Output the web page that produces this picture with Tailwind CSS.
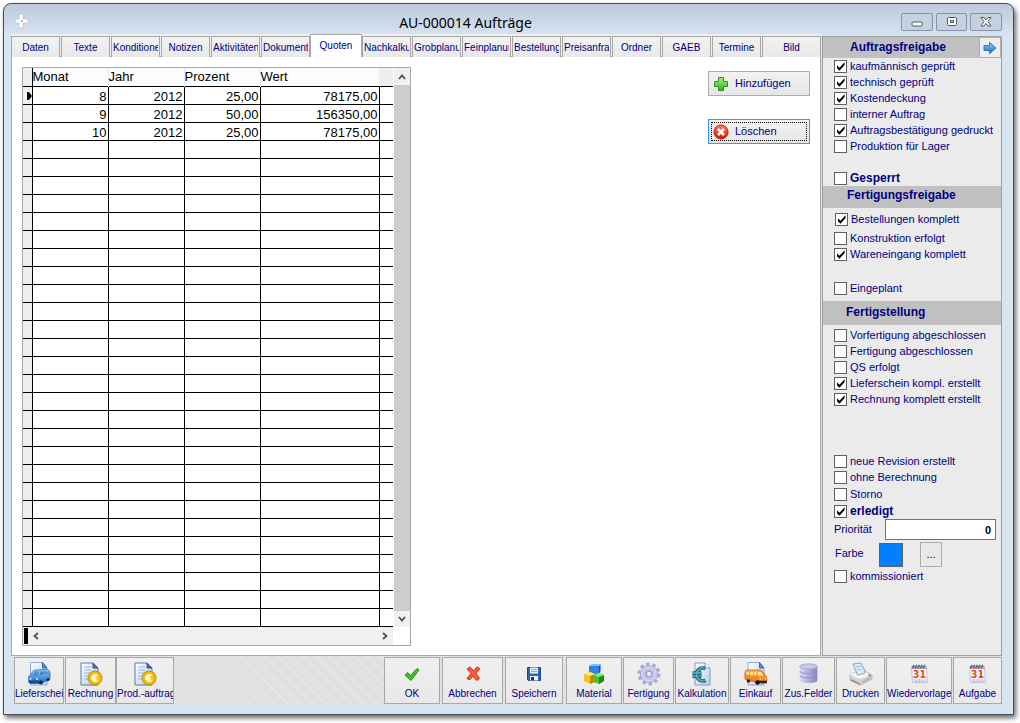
<!DOCTYPE html>
<html lang="de">
<head>
<meta charset="utf-8">
<title>AU-000014 Aufträge</title>
<script src="https://cdn.jsdelivr.net/npm/@tailwindcss/browser@4"></script>
</head>
<body class="bg-white font-['Liberation_Sans',Arial,sans-serif] text-[11px] text-[#000080]">

<svg class="absolute size-0" aria-hidden="true">
  <defs>
    <linearGradient id="gBlue" x1="0" y1="0" x2="0" y2="1"><stop offset="0" stop-color="#8fd0fb"/><stop offset="1" stop-color="#1667c4"/></linearGradient>
    <linearGradient id="gOrange" x1="0" y1="0" x2="0" y2="1"><stop offset="0" stop-color="#ffb04a"/><stop offset="1" stop-color="#f0740f"/></linearGradient>
    <linearGradient id="gPaper" x1="0" y1="0" x2="1" y2="1"><stop offset="0" stop-color="#ffffff"/><stop offset="1" stop-color="#b4cdf0"/></linearGradient>
    <linearGradient id="gSteel" x1="0" y1="0" x2="1" y2="0"><stop offset="0" stop-color="#dcdcf4"/><stop offset="1" stop-color="#8584c0"/></linearGradient>
    <linearGradient id="gGreen" x1="0" y1="0" x2="0" y2="1"><stop offset="0" stop-color="#a5f07a"/><stop offset="1" stop-color="#2fb51c"/></linearGradient>
    <linearGradient id="gRed" x1="0" y1="0" x2="0" y2="1"><stop offset="0" stop-color="#ff8066"/><stop offset="1" stop-color="#d01505"/></linearGradient>
  </defs>
  <symbol id="tick" viewBox="0 0 13 13"><path d="M3 5.2v3l2.500 2.600L10.600 5V2.200L5.500 7.700z" fill="#000"/></symbol>
  <symbol id="plus" viewBox="0 0 16 16"><path d="M5.500 1.500h5v4h4v5h-4v4h-5v-4h-4v-5h4z" fill="url(#gGreen)" stroke="#259a1a"/></symbol>
  <symbol id="del" viewBox="0 0 16 16"><circle cx="8" cy="8" r="7" fill="url(#gRed)" stroke="#c2200e"/><path d="M5 5l6 6M11 5l-6 6" stroke="#fff" stroke-width="2.600"/></symbol>
  <symbol id="arrow" viewBox="0 0 14 14"><path d="M1 4.500h5.500V1.300L13 7l-6.500 5.700V9.500H1z" fill="url(#gBlue)" stroke="#2a6fc4" stroke-width=".9"/></symbol>
  <symbol id="van" viewBox="0 0 24 24"><path d="M3.500 .5h12l4.500 5.500v17H3.500z" fill="url(#gPaper)" stroke="#8fabdc"/><path d="M15.500 .5v5.500H20z" fill="#5b8ad0" stroke="#3d66a8"/><path d="M1.500 20V15l4-5q1-2 3-2l12-.5q2 .5 2.500 3v7l-10 4H3z" fill="url(#gBlue)" stroke="#1f72c8" stroke-width=".8"/><path d="M4.500 14l3.500-4.500h4L11 14z" fill="#4c94cf"/><path d="M13.500 9.500h2.800v3l-3.300.5zM17.300 9.500h2l.2 2.500-2.200.3zM20.300 9.500h1l.5 2.200-1.300.2z" fill="#3a7fbe"/><path d="M2 18.500h10V21H2z" fill="#0f4f98"/><circle cx="14" cy="20.500" r="1.900" fill="#222"/><circle cx="21" cy="17.500" r="1.500" fill="#222"/><path d="M2.500 16.800h2M9 16.800h2" stroke="#fff" stroke-width="1.300"/></symbol>
  <symbol id="vanOrange" viewBox="0 0 24 24"><path d="M4 .5h11.500l4.500 5.500v17H4z" fill="url(#gPaper)" stroke="#8fabdc"/><path d="M15.500 .5v5.500H20z" fill="#5b8ad0" stroke="#3d66a8"/><path d="M1 17V10.500q0-2 2-2.500h12q2 0 3 1l4 5 1 4-1 2H12L2 18z" fill="url(#gOrange)" stroke="#c8620c" stroke-width=".8"/><path d="M2.500 10h2.500v3l-2.500-.4zM6 10h3v3.200H6zM10 10h2.500v3.500l-2.500-.2zM13.500 10h3l3 3.500-5 .2z" fill="#ffdf8c"/><circle cx="4.500" cy="19" r="1.700" fill="#222"/><path d="M13 18.800h10v2.500H13z" fill="#292929"/><circle cx="13.500" cy="20.500" r="2.200" fill="#111"/><path d="M15.500 16.800h1.800M21 16.800h1" stroke="#fff" stroke-width="1.200"/></symbol>
  <symbol id="euroDoc" viewBox="0 0 24 24"><path d="M2 1h12l5 5v17H2z" fill="url(#gPaper)" stroke="#5a78ae"/><path d="M14 1v5h5z" fill="#4c7cc4" stroke="#2c4c86"/><path d="M5 5h7M5 8h7M5 11h6M5 14h4M5 17h4" stroke="#9fb7de"/><circle cx="16" cy="16" r="7" fill="#efb708" stroke="#c98a00"/><circle cx="16" cy="16" r="4.800" fill="#f8c81e"/><path d="M18.600 13.500a3.200 3.200 0 1 0 0 5M12.500 15.300h5M12.500 17h5" fill="none" stroke="#fff" stroke-width="1.400"/></symbol>
  <symbol id="ok" viewBox="0 0 24 24"><path d="M5 13l2.500-2.500 3 3L17 6.500l2 1.500-8 10.500z" fill="#3fc41f" stroke="#208f10" stroke-linejoin="round"/></symbol>
  <symbol id="cancel" viewBox="0 0 24 24"><path d="M6 7l3-2 3.500 4L16 5l2.800 1.500L15 11.500l3.500 5-3 2-3.500-4.500-3.500 4-2.500-1.500 4-5z" fill="#fb5a38" stroke="#c92c14" stroke-linejoin="round"/></symbol>
  <symbol id="disk" viewBox="0 0 24 24"><path d="M5.500 5.500h13v13h-12l-1-1z" fill="#2c67b4" stroke="#1b4788"/><path d="M8 5.500h8v6H8z" fill="#e7eef8"/><path d="M9 7.500h6M9 9.500h6" stroke="#93abd0"/><path d="M8 14h8v4.500H8z" fill="#f3f3f3"/><path d="M9 15h3v3.500H9z" fill="#163a70"/></symbol>
  <symbol id="cubes" viewBox="0 0 24 24"><path d="M7 4l3-2h8l-1 2z" fill="#7cc0ff"/><path d="M7 4h10v8H7z" fill="#2c86ea"/><path d="M17 4l1.500-2v7L17 12z" fill="#0d4fae"/><path d="M2 12l6-2 5 2v8l-5 2-6-3z" fill="#f7c41c"/><path d="M8 14l5-2v8l-5 2z" fill="#c88700"/><path d="M2 12l6-2 5 2-5 2z" fill="#ffe670"/><path d="M12 13l5-2 5 2v6l-5 3-5-2z" fill="#4cc23c"/><path d="M17 15l5-2v6l-5 3z" fill="#1d8a16"/><path d="M12 13l5-2 5 2-5 2z" fill="#90e878"/></symbol>
  <symbol id="gear" viewBox="0 0 24 24"><circle cx="12" cy="12" r="9.500" fill="none" stroke="#a9aad6" stroke-width="4" stroke-dasharray="3.300 2.670"/><circle cx="12" cy="12" r="8.600" fill="#cfd0ee" stroke="#9c9dcc" stroke-width=".8"/><circle cx="12" cy="12" r="5.500" fill="#bfc0e4"/><circle cx="12" cy="12" r="2.800" fill="#ececec" stroke="#8b8cbc"/></symbol>
  <symbol id="calc" viewBox="0 0 24 24"><path d="M5 1h10l5 5v17H5z" fill="url(#gPaper)" stroke="#8d97b8"/><path d="M15 1v5h5" fill="#fff" stroke="#8d97b8"/><path d="M15.500 6.500a6.500 6.500 0 1 0 0 12M2.500 11h9M2.500 14.200h9" fill="none" stroke="#1d6078" stroke-width="3.600"/><path d="M15.500 6.500a6.500 6.500 0 1 0 0 12M2.500 11h9M2.500 14.200h9" fill="none" stroke="#5fb8c8" stroke-width="1.300"/></symbol>
  <symbol id="db" viewBox="0 0 24 24"><path d="M2 4v16c0 4 20 4 20 0V4z" fill="url(#gSteel)"/><path d="M2 9c0 4 20 4 20 0M2 14c0 4 20 4 20 0" fill="none" stroke="#8f8ec4"/><ellipse cx="12" cy="4" rx="10" ry="3" fill="#c9c9ea" stroke="#9d9dcc"/></symbol>
  <symbol id="printer" viewBox="0 0 24 24"><path d="M4 2l8-1 5 10-8 3z" fill="#d9edff" stroke="#76a9dc"/><path d="M7 5l5-1M8 8l5-1" stroke="#9bc2e8"/><path d="M1 13l5-3 3 3 7-2v-2l7 4v4l-12 6-10-5z" fill="#d4d4d4" stroke="#9c9c9c" stroke-width=".7"/><path d="M1 13l10 4 12-4-6-3-1 2-7 2-3-4z" fill="#f4f4f4"/><path d="M2 17l9 4v2l-9-4z" fill="#999"/><path d="M13 20l8-4" stroke="#aaa" stroke-width="1.300"/><circle cx="20.500" cy="13.500" r="1.300" fill="#33c63a"/></symbol>
</svg>

<div class="pt-[3px] pr-[6px] pb-[8px] pl-[3px]">
<main class="flex flex-col rounded-t-lg border border-[#4a4d52] bg-[#d7e4f1] bg-[linear-gradient(#bccad9,#d7e4f2_32px)] pr-[11px] pb-2 pl-[7px] shadow-[2px_3px_5px_rgba(0,0,0,0.6)]">

  <header class="flex h-[30px] items-center">
    <svg class="mt-1 ml-[3px] size-4" viewBox="0 0 16 16"><path d="M5 1h4v5h5v4H9v5H5v-5H1V6h4z" fill="#fff" stroke="#a8c4da" stroke-width=".7"/><circle cx="8" cy="8" r="1" fill="#f08030"/></svg>
    <h1 class="mt-2 flex-1 text-center font-['Noto_Sans','Open_Sans',sans-serif] text-[14px] leading-5 text-black">AU-000014 Aufträge</h1>
    <div class="mt-[5px] flex justify-end gap-[3px]">
      <button aria-label="Minimieren" class="grid h-[18px] w-8 place-items-center rounded-[2px] border border-[#8593ab] bg-[#c3d1e0]"><svg class="h-3 w-3" viewBox="0 0 12 12"><rect x="1" y="6" width="10" height="4" rx="1" fill="#fff" stroke="#555a64"/></svg></button>
      <button aria-label="Maximieren" class="grid h-[18px] w-[31px] place-items-center rounded-[2px] border border-[#8593ab] bg-[#c3d1e0]"><svg class="h-3 w-3" viewBox="0 0 12 12"><rect x="1.500" y="1.500" width="9" height="8" rx="1" fill="#fff" stroke="#555a64"/><rect x="4.500" y="4.500" width="3" height="2" fill="#c3d1e0" stroke="#555a64"/></svg></button>
      <button aria-label="Schließen" class="grid h-[18px] w-8 place-items-center rounded-[2px] border border-[#8593ab] bg-[#c3d1e0]"><svg class="h-3 w-3" viewBox="0 0 12 12"><path d="M1 1.500h3L6 4l2-2.500h3L8 5.500l3 4.500H8L6 7.500 4 10H1l3-4.500z" fill="#fff" stroke="#555a64"/></svg></button>
    </div>
  </header>

  <div class="flex">
    <section class="flex min-w-0 flex-1 flex-col">
      <nav id="tabs" class="flex h-[23px] items-end bg-[#efefef]" aria-label="Register"></nav>
      <div class="flex flex-1 items-start justify-between border-x border-b border-[#a8a8a8] bg-white pt-[10px] pr-[10px] pb-[9px] pl-[10px]">
        <div class="w-[389px] border border-[#a8a8a8]">
          <div class="flex">
            <table class="w-[370px] table-fixed border-collapse text-[13px] leading-[15px] text-black">
              <colgroup><col class="w-[9px]"><col class="w-[76px]"><col class="w-[76px]"><col class="w-[76px]"><col class="w-[119px]"><col></colgroup>
              <thead>
                <tr class="h-[18px] bg-[#fcfcfc] text-left">
                  <td class="border-r border-black bg-[#efefef] p-0"></td>
                  <th class="border-r border-[#e3ecf8] p-0 font-normal">Monat</th>
                  <th class="border-r border-[#e3ecf8] p-0 font-normal">Jahr</th>
                  <th class="border-r border-[#e3ecf8] p-0 font-normal">Prozent</th>
                  <th class="p-0 font-normal">Wert</th>
                  <td class="bg-[#efefef] p-0"></td>
                </tr>
              </thead>
              <tbody id="rows"></tbody>
            </table>
            <div class="ml-px flex w-4 flex-col bg-[#cdcdcd]">
              <button aria-label="Nach oben" class="grid h-[17px] place-items-center bg-[#f0f0f0]"><svg class="h-2 w-2" viewBox="0 0 8 8"><path d="M1 6l3-3.500L7 6" fill="none" stroke="#505050" stroke-width="1.800"/></svg></button>
              <button aria-label="Nach unten" class="mt-auto grid h-4 place-items-center bg-[#f0f0f0]"><svg class="h-2 w-2" viewBox="0 0 8 8"><path d="M1 2l3 3.500L7 2" fill="none" stroke="#505050" stroke-width="1.800"/></svg></button>
            </div>
          </div>
          <div class="mr-[17px] flex h-[18px] items-center bg-[#f0f0f0]">
            <span class="ml-px h-4 w-1 bg-black"></span>
            <button aria-label="Nach links" class="ml-1"><svg class="h-2 w-2" viewBox="0 0 8 8"><path d="M6 1L2.500 4 6 7" fill="none" stroke="#505050" stroke-width="1.800"/></svg></button>
            <button aria-label="Nach rechts" class="mr-1 ml-auto"><svg class="h-2 w-2" viewBox="0 0 8 8"><path d="M2 1l3.500 3L2 7" fill="none" stroke="#505050" stroke-width="1.800"/></svg></button>
          </div>
        </div>
        <div class="mt-1 flex w-[102px] flex-col gap-[23px]">
          <button class="flex h-[25px] items-center gap-[6px] border border-[#adadad] bg-[linear-gradient(#f2f2f2,#e6e6e6)] pl-1"><svg class="size-4"><use href="#plus"/></svg>Hinzufügen</button>
          <button class="flex h-[25px] border border-[#3399ff] bg-[linear-gradient(#f2f2f2,#e6e6e6)] p-[2px]"><span class="flex h-full flex-1 items-center gap-[6px] border border-dotted border-black pl-px"><svg class="size-4"><use href="#del"/></svg>Löschen</span></button>
        </div>
      </div>
    </section>

    <aside class="mt-[2px] ml-px w-[180px] border border-[#a0a0a0] bg-[#ebebeb]">
      <h2 class="flex h-[21px] items-center justify-end bg-[#c0c0c0] text-[12px] font-bold"><span class="flex-1 pb-px pl-[27px]">Auftragsfreigabe</span><button aria-label="Weiter" class="grid h-[21px] w-[22px] place-items-center border border-[#b0b0b0] bg-[#eeeeee]"><svg class="size-[14px]"><use href="#arrow"/></svg></button></h2>
      <div data-checks="kaufmännisch geprüft*|technisch geprüft*|Kostendeckung*|interner Auftrag|Auftragsbestätigung gedruckt*|Produktion für Lager"></div>
      <div class="mt-4 text-[12px] font-bold" data-checks="Gesperrt"></div>
      <h2 class="flex h-[22px] items-center bg-[#c0c0c0] pb-1 pl-6 text-[12px] font-bold">Fertigungsfreigabe</h2>
      <div class="mt-[3px] pl-px" data-checks="Bestellungen komplett*"></div>
      <div class="mt-[3px]" data-checks="Konstruktion erfolgt|Wareneingang komplett*"></div>
      <div class="mt-[18px]" data-checks="Eingeplant"></div>
      <h2 class="mt-[5px] flex h-6 items-center bg-[#c0c0c0] pb-[2px] pl-[23px] text-[12px] font-bold">Fertigstellung</h2>
      <div class="mt-[2px]" data-checks="Vorfertigung abgeschlossen|Fertigung abgeschlossen|QS erfolgt|Lieferschein kompl. erstellt*|Rechnung komplett erstellt*"></div>
      <div class="mt-[46px]" data-checks="neue Revision erstellt|ohne Berechnung"></div>
      <div class="mt-px" data-checks="Storno"></div>
      <div class="mt-px text-[12px] font-bold" data-checks="erledigt*"></div>
      <div class="flex items-center justify-between pr-[5px] pl-[11px]">
        <label for="prio">Priorität</label>
        <input id="prio" value="0" class="h-[21px] w-[111px] border border-[#707070] bg-white px-1 text-right text-[11px] font-bold text-black">
      </div>
      <div class="mt-[2px] flex items-center pl-3">
        <span class="w-11 pb-[2px]">Farbe</span>
        <span class="h-6 w-6 border border-[#606060] bg-[#0080ff]"></span>
        <button aria-label="Farbe wählen" class="ml-[17px] h-[25px] w-[22px] border border-[#adadad] bg-[#e9e9e9] text-black">...</button>
      </div>
      <div class="mt-px" data-checks="kommissioniert"></div>
    </aside>
  </div>

  <footer class="flex h-[50px] items-start bg-[#e2e2e2] bg-[linear-gradient(90deg,#e2e2e2_190px,transparent_260px),repeating-linear-gradient(45deg,#e0e0e0_0px,#e0e0e0_7px,#e6e6e6_7px,#e6e6e6_9px)] pt-px pl-[3px]" id="tools"></footer>
</main>
</div>

<script>
const tabs = ['Daten','Texte','Konditione','Notizen','Aktivitäten','Dokumente','Quoten','Nachkalku','Grobplanun','Feinplanun','Bestellung','Preisanfra','Ordner','GAEB','Termine','Bild'];
const wide = ['Konditione','Aktivitäten','Dokumente','Nachkalku','Grobplanun','Feinplanun','Bestellung','Preisanfra'];
document.getElementById('tabs').innerHTML = tabs.map(t => {
  if (t === 'Quoten') return `<button class="-ml-px h-[23px] w-[52px] border-x border-t border-[#a8a8a8] bg-white pb-[2px] text-[10px]">${t}</button>`;
  const size = t === 'Bild' ? 'h-[21px] flex-1' : 'mr-px h-[21px] w-[49px]';
  const align = wide.includes(t) ? 'text-left' : 'text-center';
  return `<span class="flex h-[21px] border-b border-[#a8a8a8] ${t === 'Bild' ? 'flex-1' : 'w-[50px]'}"><button class="${size} overflow-hidden border-x border-t border-[#a8a8a8] bg-[linear-gradient(#f2f2f2,#e8e8e8)] px-px text-[10px] whitespace-nowrap ${align}"><span class="block overflow-hidden">${t}</span></button></span>`;
}).join('');

const data = [['8','2012','25,00','78175,00'],['9','2012','50,00','156350,00'],['10','2012','25,00','78175,00']];
let html = '';
for (let i = 0; i < 30; i++) {
  const r = data[i] || ['','','',''];
  const mark = i === 0 ? '<svg class="mt-[2px] ml-1 h-2 w-[5px]" viewBox="0 0 5 8"><path d="M0 0h2l3 4-3 4H0z"/></svg>' : '';
  html += `<tr class="h-[18px] border-y border-black"><td class="border-r border-black bg-[#efefef] p-0">${mark}</td>` +
    r.map(c => `<td class="border-r border-black pt-[2px] pr-px pb-0 pl-0 text-right">${c}</td>`).join('') + '<td class="p-0"></td></tr>';
}
document.getElementById('rows').innerHTML = html;

document.querySelectorAll('[data-checks]').forEach(box => {
  box.innerHTML = box.dataset.checks.split('|').map(s => {
    const on = s.endsWith('*');
    return `<label class="flex h-4 items-center gap-[3px] pl-[11px] whitespace-nowrap"><span class="relative block size-[13px]"><input type="checkbox" ${on ? 'checked' : ''} class="peer block size-[13px] appearance-none border border-[#606060] bg-white"><svg class="pointer-events-none absolute inset-0 hidden size-[13px] peer-checked:block"><use href="#tick"/></svg></span>${s.replace('*','')}</label>`;
  }).join('');
});

const calendar = '<path d="M3 5h17l1 17-17 .5z" fill="#fafaff" stroke="#b9bcd8"/><path d="M3 3h17v4H3z" fill="#a3a7c6"/><path d="M4 6l2-4M7 6l2-4M10 6l2-4M13 6l2-4M16 6l2-4" stroke="#4d4d4d" stroke-width="1.200"/><path d="M5 19.500h15M5 21.500h15M8 18v4M12 18v4M16 18v4" stroke="#b5b8da" stroke-width=".9"/><text x="12" y="17" text-anchor="middle" font-family="DejaVu Sans" font-weight="bold" font-size="11" fill="#f04a0a">31</text>';
const tools = [
  ['Lieferschei','van','w-[50px] mr-px'],['Rechnung','euroDoc','w-[51px]'],['Prod.-auftrag','euroDoc','w-[58px] mr-auto'],
  ['OK','ok','w-[56px] mr-[2px]'],['Abbrechen','cancel','w-[61px] mr-[2px]'],['Speichern','disk','w-[58px] mr-[3px]'],
  ['Material','cubes','w-[56px] mr-px'],['Fertigung','gear','w-[51px] mr-px'],['Kalkulation','calc','w-[54px] mr-px'],['Einkauf','vanOrange','w-[51px] mr-px'],
  ['Zus.Felder','db','w-[53px] mr-px'],['Drucken','printer','w-[49px] mr-px'],['Wiedervorlage','cal','w-[66px] mr-px'],['Aufgabe','cal','w-[49px]']
];
document.getElementById('tools').innerHTML = tools.map(([t, icon, cls]) => {
  const s = ['db','cal'].includes(icon) ? 'size-[21px] mb-[2px]' : 'size-6';
  const art = icon === 'cal' ? calendar : `<use href="#${icon}"/>`;
  const align = t === 'Prod.-auftrag' ? 'text-left' : 'text-center';
  return `<button class="${cls} flex h-[47px] flex-col items-center justify-end overflow-hidden border border-[#a8a8a8] bg-[linear-gradient(#f0f0f0,#e8e8e8)] pb-[3px] text-[10px] leading-3 whitespace-nowrap"><svg class="${s}" ${icon === 'cal' ? 'viewBox="0 0 24 24"' : ''}>${art}</svg><span class="mt-[2px] block w-full overflow-hidden ${align}">${t}</span></button>`;
}).join('');
</script>
</body>
</html>
